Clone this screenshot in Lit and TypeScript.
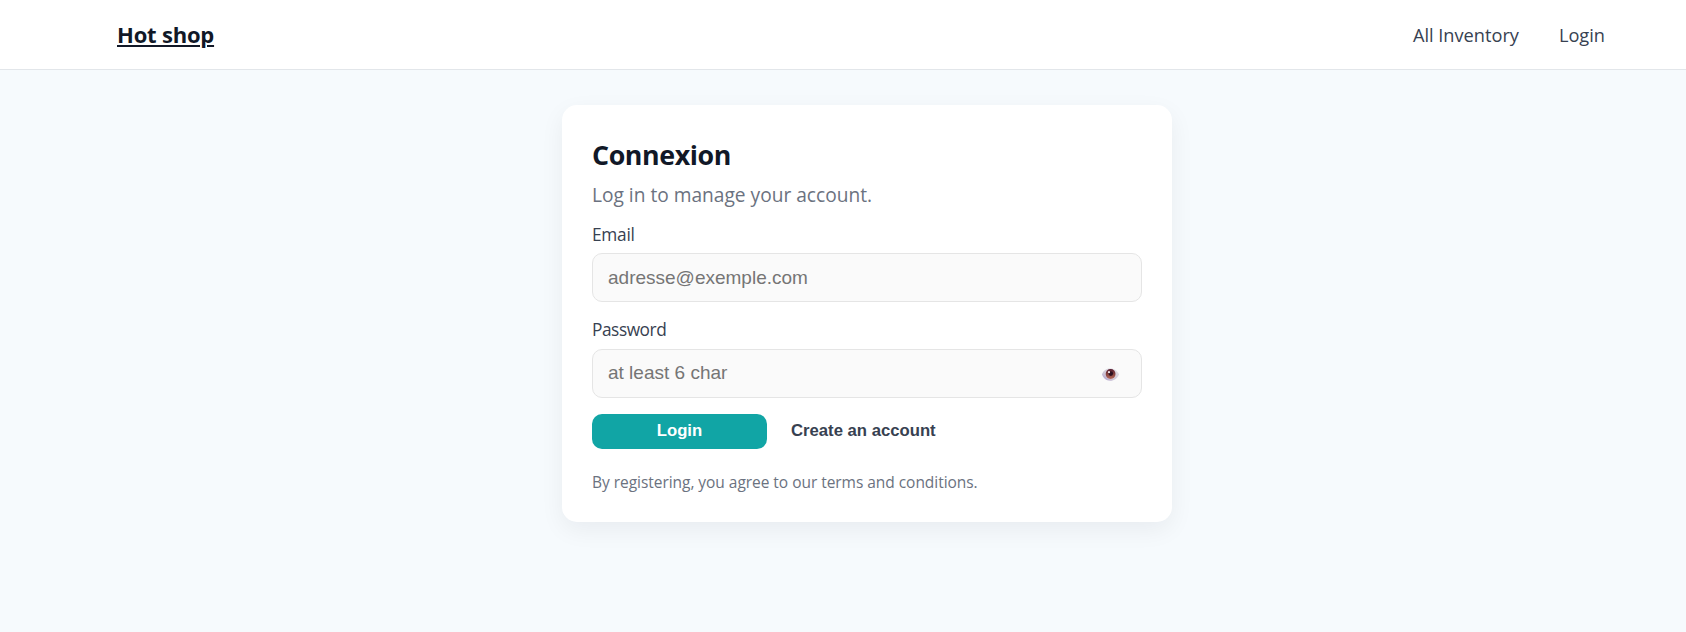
import { LitElement, html, css } from "lit";

class EyeIcon extends LitElement {
  static styles = css`
    :host { display: block; width: 17px; height: 13px; }
    svg { display: block; }
  `;
  render() {
    return html`<svg width="17" height="13" viewBox="0 0 17 13" aria-hidden="true">
      <defs>
        <linearGradient id="white" x1="0" y1="1" x2="1" y2="0">
          <stop offset="0" stop-color="#a592c8" />
          <stop offset="0.35" stop-color="#cdc5d6" />
          <stop offset="1" stop-color="#e6e3e6" />
        </linearGradient>
        <linearGradient id="iris" x1="0" y1="0" x2="0" y2="1">
          <stop offset="0" stop-color="#571d30" />
          <stop offset="0.55" stop-color="#8a4540" />
          <stop offset="1" stop-color="#b5695a" />
        </linearGradient>
      </defs>
      <path d="M0 6.3C1.2 2.4 4.6 0.4 8.3 0.4C12.2 0.4 15.4 2.6 17 6.2C15.7 10.2 12.2 12.7 8.2 12.7C4.2 12.7 1.2 10.2 0 6.3Z" fill="url(#white)" />
      <circle cx="8.6" cy="6" r="4.9" fill="url(#iris)" />
      <circle cx="8.8" cy="5.6" r="2.3" fill="#2c1020" />
      <circle cx="7" cy="4.2" r="1.1" fill="#f3e6ea" />
    </svg>`;
  }
}
customElements.define("eye-icon", EyeIcon);

class AppRoot extends LitElement {
  static styles = css`
    :host {
      display: block;
      min-height: 100vh;
      background: #f6fafd;
      font-family: "Open Sans", "Noto Sans", sans-serif;
      color: #374151;
    }
    * { box-sizing: border-box; }
    .bar {
      display: flex;
      align-items: center;
      justify-content: space-between;
      height: 70px;
      padding: 0 81px 0 117px;
      background: #fff;
      border-bottom: 1px solid #e2e6ea;
    }
    .brand {
      padding-bottom: 2px;
      font-size: 22px;
      font-weight: 700;
      letter-spacing: -0.2px;
      color: #111827;
      text-decoration: underline;
      text-decoration-thickness: 2px;
      text-underline-offset: 2px;
    }
    nav { display: flex; gap: 40px; }
    nav a { font-size: 18.2px; line-height: 24px; }
    .card {
      width: 610px;
      margin: 35px 0 0 562px;
      padding: 32px 30px 28px;
      background: #fff;
      border-radius: 15px;
      box-shadow: 0 8px 24px rgba(15, 23, 42, 0.06);
    }
    h1 {
      margin: 0 0 8px;
      font-size: 26.8px;
      line-height: 36px;
      font-weight: 700;
      letter-spacing: -0.4px;
      color: #111827;
    }
    .lead {
      margin: 0 0 14px;
      font-size: 19.15px;
      line-height: 28px;
      color: #6b7280;
    }
    label {
      display: block;
      font-size: 17.3px;
      line-height: 24px;
      letter-spacing: -0.25px;
      margin-bottom: 6px;
    }
    .pass { letter-spacing: -0.45px; margin-bottom: 7px; }
    .field {
      display: flex;
      align-items: center;
      height: 49px;
      padding: 0 22px 0 15px;
      margin-bottom: 16px;
      background: #fafafa;
      border: 1px solid #e5e5e5;
      border-radius: 10px;
    }
    input {
      flex: 1;
      min-width: 0;
      padding: 0;
      border: 0;
      outline: 0;
      background: none;
      font: 19px "Liberation Sans", Arial, sans-serif;
    }
    .last input { padding-bottom: 2px; }
    input::placeholder { color: #757575; }
    .eye { padding-top: 1px; }
    .actions { display: flex; gap: 12px; height: 35px; }
    button {
      border: 0;
      padding: 0 12px 2px;
      border-radius: 10px;
      background: none;
      font: 700 16.7px "Liberation Sans", Arial, sans-serif;
      color: #374151;
    }
    .primary { width: 175px; background: #11a5a5; color: #fff; }
    .terms {
      margin: 21px 0 0;
      font-size: 15.5px;
      line-height: 24px;
      letter-spacing: -0.04px;
      color: #6b7280;
    }
  `;
  render() {
    return html`
      <header class="bar">
        <a class="brand">Hot shop</a>
        <nav><a>All Inventory</a><a>Login</a></nav>
      </header>
      <main class="card">
        <h1>Connexion</h1>
        <p class="lead">Log in to manage your account.</p>
        <label for="email">Email</label>
        <div class="field"><input id="email" type="email" placeholder="adresse@exemple.com" /></div>
        <label class="pass" for="password">Password</label>
        <div class="field last">
          <input id="password" type="password" placeholder="at least 6 char" />
          <eye-icon class="eye"></eye-icon>
        </div>
        <div class="actions">
          <button class="primary">Login</button>
          <button>Create an account</button>
        </div>
        <p class="terms">By registering, you agree to our terms and conditions.</p>
      </main>
    `;
  }
}
customElements.define("app-root", AppRoot);
